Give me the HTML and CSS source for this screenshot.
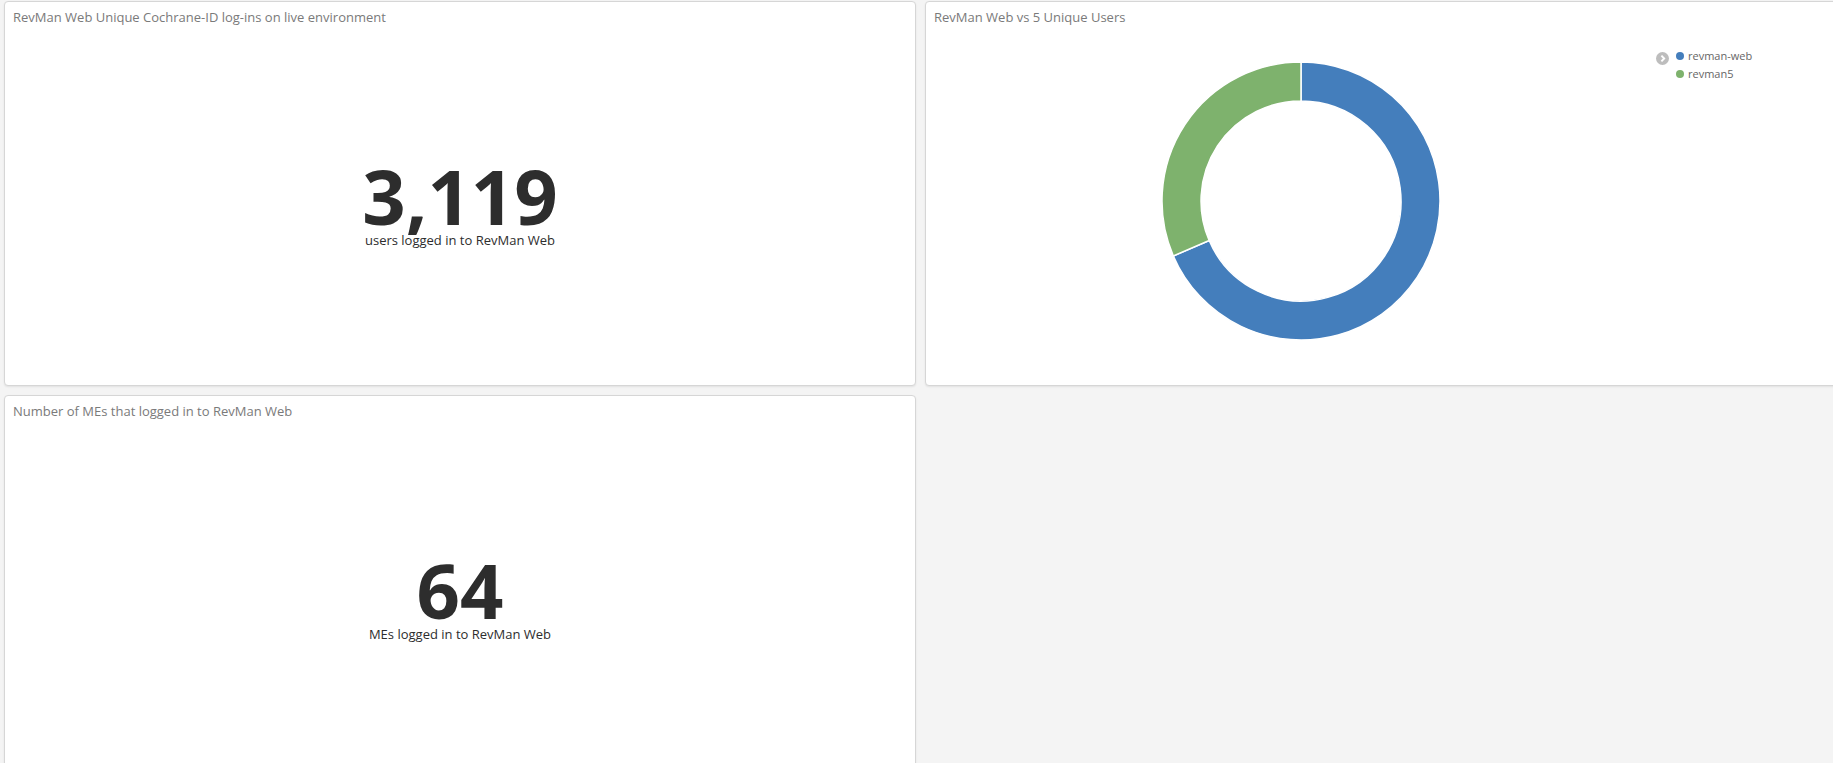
FILE: index.html
```html
<!DOCTYPE html>
<html lang="en">
<head>
  <meta charset="UTF-8">
  <title>RevMan Web dashboard</title>
  <link rel="stylesheet" href="styles.css">
</head>
<body>
  <div class="dashboard">
    <div class="panel">
      <div class="panel-title">RevMan Web Unique Cochrane-ID log-ins on live environment</div>
      <div class="metric">
        <div class="metric-value">3,119</div>
        <div class="metric-label">users logged in to RevMan Web</div>
      </div>
    </div>

    <div class="panel">
      <div class="panel-title">RevMan Web vs 5 Unique Users</div>
      <div class="pie-body">
        <div class="pie-chart">
          <svg width="280" height="280" viewBox="-140 -140 280 280">
            <path class="slice-web" d="M0,-139 A139,139 0 1 1 -127.66,54.97 L-91.84,39.55 A100,100 0 1 0 0,-100 Z"/>
            <path class="slice-rm5" d="M-127.66,54.97 A139,139 0 0 1 0,-139 L0,-100 A100,100 0 0 0 -91.84,39.55 Z"/>
          </svg>
        </div>
        <div class="legend">
          <span class="legend-toggle">
            <svg width="13" height="13" viewBox="0 0 13 13">
              <circle cx="6.5" cy="6.5" r="6.5" fill="#bdbdbd"/>
              <path d="M5.4 3.6 L8.2 6.5 L5.4 9.4" fill="none" stroke="#fff" stroke-width="1.9"/>
            </svg>
          </span>
          <ul class="legend-list">
            <li><span class="dot dot-web"></span>revman-web</li>
            <li><span class="dot dot-rm5"></span>revman5</li>
          </ul>
        </div>
      </div>
    </div>

    <div class="panel">
      <div class="panel-title">Number of MEs that logged in to RevMan Web</div>
      <div class="metric">
        <div class="metric-value">64</div>
        <div class="metric-label">MEs logged in to RevMan Web</div>
      </div>
    </div>
  </div>
</body>
</html>
```

FILE: styles.css
```css
html, body {
  margin: 0;
  overflow: hidden;
}
body {
  font-family: 'Open Sans', 'Liberation Sans', sans-serif;
  background: #f4f4f4;
  color: #2d2d2d;
}
.dashboard {
  display: grid;
  grid-template-columns: 912px 912px;
  grid-template-rows: 385px 385px;
  gap: 9px;
  padding: 1px 0 0 4px;
  width: 1900px;
}
.panel {
  background: white;
  border: 1px solid #d6d6d6;
  border-radius: 4px;
  box-shadow: 0 1px 2px rgba(0,0,0,0.08);
  display: flex;
  flex-direction: column;
  box-sizing: border-box;
  overflow: hidden;
}
.panel-title {
  font-size: 13px;
  line-height: 16px;
  color: #7a7a7a;
  padding: 7px 8px 6px;
}
.metric {
  flex: 1;
  display: flex;
  flex-direction: column;
  align-items: center;
  justify-content: center;
  padding-bottom: 9px;
}
.metric-value {
  font-size: 76px;
  font-weight: 700;
  line-height: 72px;
  color: #2d2d2d;
}
.metric-label {
  font-size: 13px;
  line-height: 16px;
}
.pie-body {
  flex: 1;
  display: flex;
}
.pie-chart {
  flex: 1;
  display: flex;
  align-items: center;
  justify-content: center;
  padding-bottom: 14px;
}
.slice-web {
  fill: #447ebc;
  stroke: white;
  stroke-width: 1.5;
}
.slice-rm5 {
  fill: #7eb26d;
  stroke: white;
  stroke-width: 1.5;
}
.legend {
  width: 160px;
  position: relative;
  padding-top: 16px;
}
.legend-toggle {
  position: absolute;
  left: -20px;
  top: 21px;
  line-height: 0;
}
.legend-list {
  list-style: none;
  margin: 0;
  padding: 0;
}
.legend-list li {
  font-size: 11px;
  line-height: 18px;
  color: #666;
  display: flex;
  align-items: center;
}
.dot {
  width: 8px;
  height: 8px;
  border-radius: 50%;
  margin-right: 4px;
}
.dot-web {
  background: #447ebc;
}
.dot-rm5 {
  background: #7eb26d;
}
```
